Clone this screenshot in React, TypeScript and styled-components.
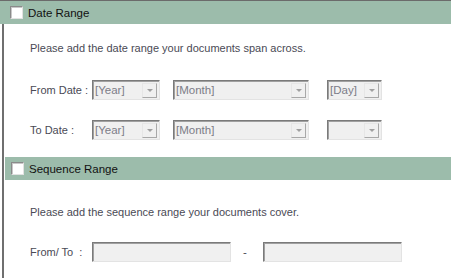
import React from "react";
import styled, {createGlobalStyle} from "styled-components";

const GlobalStyle = createGlobalStyle`
    body {
        margin: 0;
        background: #ffffff;
        font-family: "Liberation Sans", Arial, sans-serif;
    }
`;

const Page = styled.div`
    width: 451px;
    height: 278px;
    overflow: hidden;
    background: #ffffff;
`;

const SectionHeader = styled.div<{ $inset?: boolean }>`
    display: flex;
    align-items: center;
    gap: 5px;
    height: 23px;
    margin-left: ${p => (p.$inset ? "1px" : "0")};
    padding-left: ${p => (p.$inset ? "6px" : "10px")};
    background: #9cbcab;
    border-top: ${p => (p.$inset ? "0" : "1px solid #6b6b6b")};
    font-size: 11.5px;
    color: #111;
`;

const CheckBox = styled.span`
    width: 11px;
    height: 11px;
    background: #ffffff;
    border: 1px solid;
    border-color: #8a8a8a #e2e2e2 #e2e2e2 #8a8a8a;
    box-shadow: inset 1px 1px 0 #c8c8c8;
`;

const Body = styled.div`
    margin-left: 2px;
    border-left: 2px solid #6f6f6f;
    min-height: 260px;
`;

const Content = styled.div<{ $height: number }>`
    height: ${p => p.$height}px;
    padding-left: 26px;
    display: flex;
    flex-direction: column;
`;

const Intro = styled.div<{ $top: number }>`
    margin-top: ${p => p.$top}px;
    font-size: 11px;
    line-height: 14px;
    color: #4a4a55;
`;

const Row = styled.div<{ $top: number }>`
    display: flex;
    align-items: center;
    margin-top: ${p => p.$top}px;
    height: 20px;
`;

const Label = styled.div`
    width: 62px;
    font-size: 11px;
    color: #4a4a55;
    white-space: pre;
`;

const Combo = styled.div<{ $width: number; $gap?: number }>`
    box-sizing: border-box;
    width: ${p => p.$width}px;
    height: 20px;
    margin-left: ${p => p.$gap ?? 0}px;
    display: flex;
    align-items: center;
    justify-content: space-between;
    padding: 0 2px 0 2px;
    background: #f0f0f0;
    border: 1px solid;
    border-color: #7a7a7a #e3e3e3 #e3e3e3 #7a7a7a;
    box-shadow: inset 1px 1px 0 #a0a0a0;
    font-size: 11.5px;
    color: #7d7d88;
`;

const DropButton = styled.span`
    box-sizing: border-box;
    width: 15px;
    height: 15px;
    display: flex;
    align-items: center;
    justify-content: center;
    border: 1px solid;
    border-color: #e6e6e6 #a8a8a8 #a8a8a8 #e6e6e6;
    background: #f0f0f0;

    &::after {
        content: "";
        border-left: 3px solid transparent;
        border-right: 3px solid transparent;
        border-top: 3px solid #a0a0a0;
    }
`;

const TextInput = styled.div`
    box-sizing: border-box;
    width: 139px;
    height: 20px;
    background: #f0f0f0;
    border: 1px solid;
    border-color: #7a7a7a #e3e3e3 #e3e3e3 #7a7a7a;
    box-shadow: inset 1px 1px 0 #a0a0a0;
`;

const Dash = styled.span`
    box-sizing: border-box;
    width: 32px;
    padding-left: 12px;
    font-size: 11.5px;
    color: #4a4a55;
`;

const ComboBox: React.FC<{ width: number; gap?: number; text?: string }> = ({width, gap, text}) => (
    <Combo $width={width} $gap={gap}>
        <span>{text}</span>
        <DropButton/>
    </Combo>
);

export default function App() {
    return (
        <Page>
            <GlobalStyle/>
            <SectionHeader>
                <CheckBox/>
                Date Range
            </SectionHeader>
            <Body>
                <Content $height={133}>
                    <Intro $top={17}>Please add the date range your documents span across.</Intro>
                    <Row $top={25}>
                        <Label>From Date :</Label>
                        <ComboBox width={68} text="[Year]"/>
                        <ComboBox width={136} gap={13} text="[Month]"/>
                        <ComboBox width={55} gap={18} text="[Day]"/>
                    </Row>
                    <Row $top={20}>
                        <Label>To Date :</Label>
                        <ComboBox width={68} text="[Year]"/>
                        <ComboBox width={136} gap={13} text="[Month]"/>
                        <ComboBox width={55} gap={18}/>
                    </Row>
                </Content>
                <SectionHeader $inset>
                    <CheckBox/>
                    Sequence Range
                </SectionHeader>
                <Content $height={100}>
                    <Intro $top={25}>Please add the sequence range your documents cover.</Intro>
                    <Row $top={23}>
                        <Label>From/ To  :</Label>
                        <TextInput/>
                        <Dash>-</Dash>
                        <TextInput/>
                    </Row>
                </Content>
            </Body>
        </Page>
    );
}
